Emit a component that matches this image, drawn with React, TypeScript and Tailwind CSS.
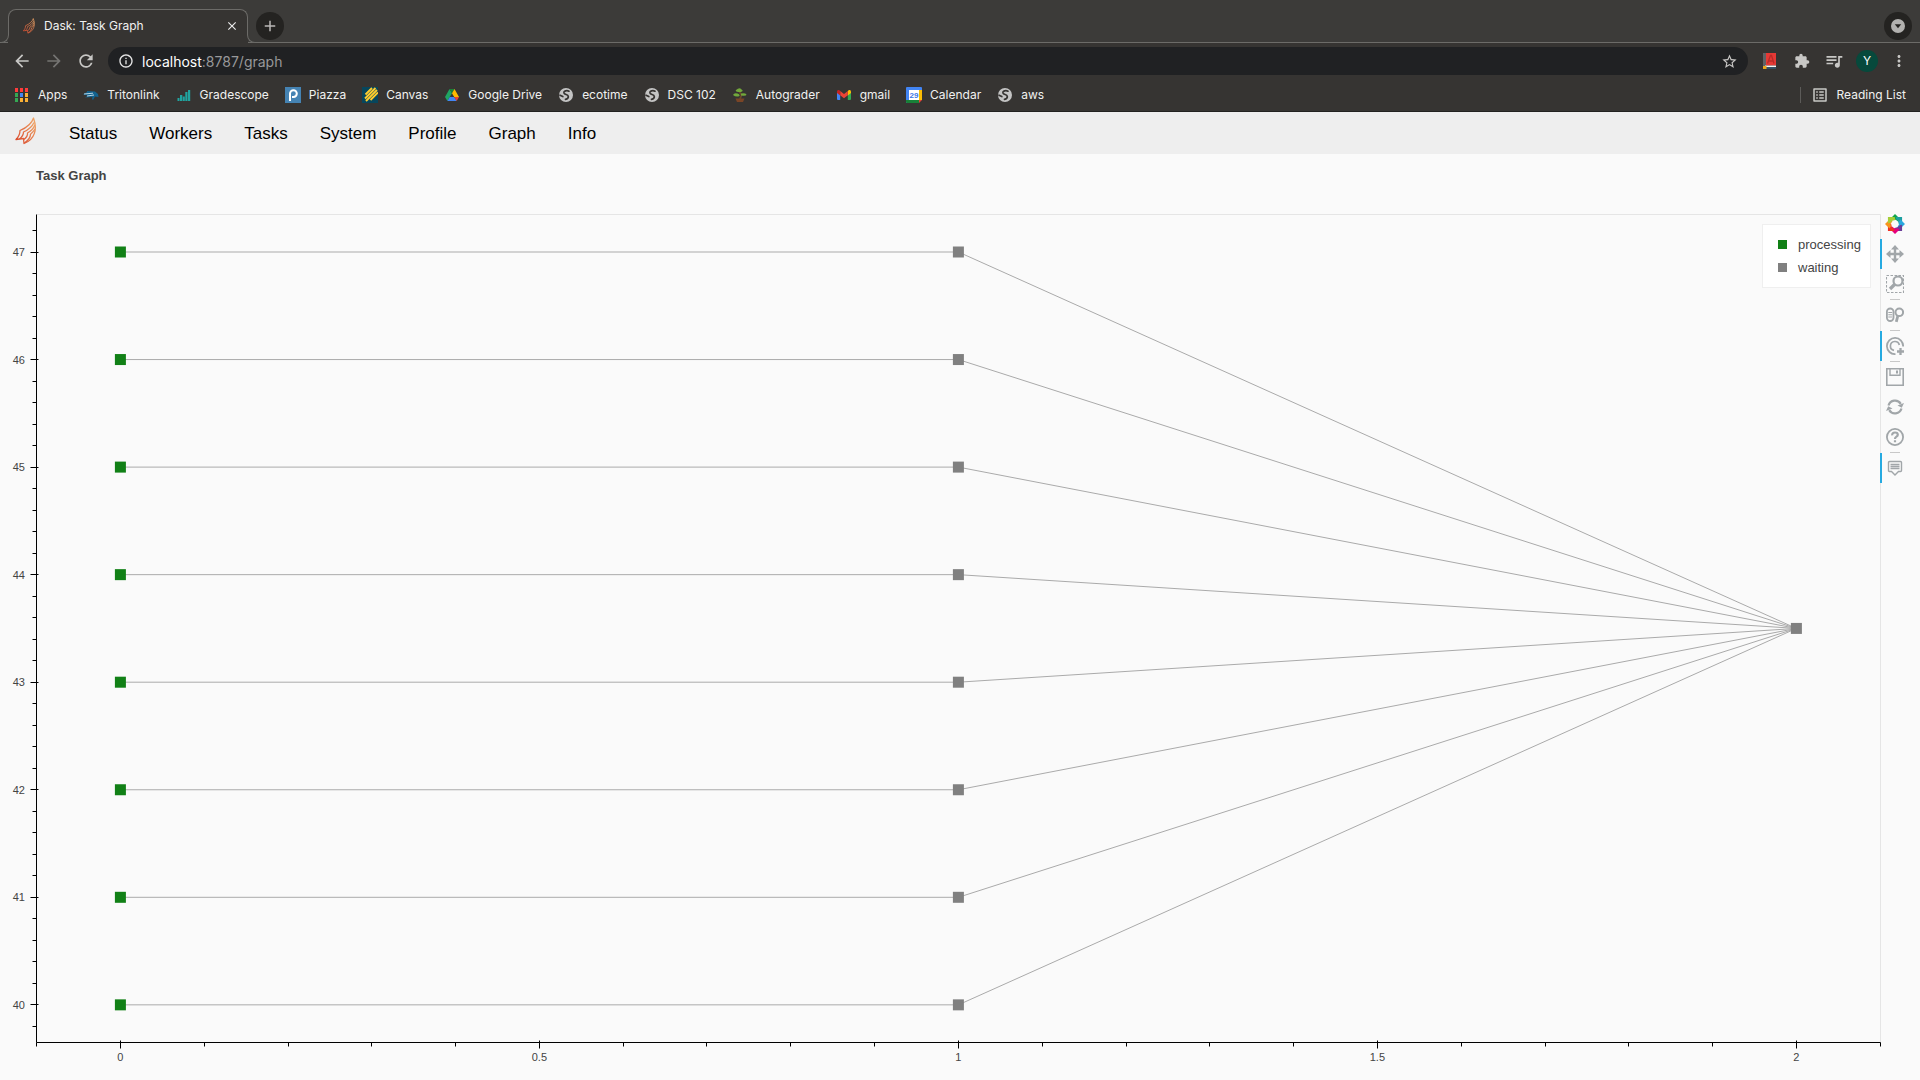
import type { ReactNode } from "react";
import {
  MdArrowBack,
  MdArrowForward,
  MdExtension,
  MdInfoOutline,
  MdMoreVert,
  MdOutlineListAlt,
  MdQueueMusic,
  MdRefresh,
  MdStarBorder,
  MdAdd,
  MdClose,
} from "react-icons/md";

function DaskLogo({ className }: { className: string }) {
  return (
    <svg viewBox="0 0 22 28" className={className} fill="none" strokeLinejoin="round" strokeWidth="1.3" aria-hidden="true">
      <defs>
        <linearGradient id="flame" x1="0" y1="1" x2="1" y2="0">
          <stop offset="0" stopColor="#d9472b" />
          <stop offset="1" stopColor="#f0a868" />
        </linearGradient>
      </defs>
      <g stroke="url(#flame)">
        <path d="M18.500 1 C17 6 12 10.500 5 13.500 C5 17 3.500 20 1 22.500 L8.500 21.500 L9 26.500 C20 22.500 22.500 12 18.500 1Z" />
        <path d="M19 5.500 C17 10 13 13 8.500 15 C8.500 17.500 7 20 4.500 22 M19.800 8 C18.500 12 16 14 12.500 16 C12.800 18 11.500 20.500 8.800 22.500 M20 12 C18.500 14.500 17 16 15.500 17.200 C15.500 20 13.500 23 9.500 26" />
      </g>
    </svg>
  );
}

function Globe() {
  return (
    <svg viewBox="0 0 16 16" className="size-4" aria-hidden="true">
      <circle cx="8" cy="8" r="7" fill="#c4c4c4" />
      <path
        d="M11 4.200 C9 3.200 5.500 3.800 6 6 C6.500 7.800 10 7.200 10.300 9.300 C10.500 11 9 12 7.500 12.300 M2 8.200 L4.800 9.600"
        fill="none"
        stroke="#363432"
        strokeWidth="1.700"
        strokeLinecap="round"
      />
    </svg>
  );
}

const appColours = ["#ff3b3b", "#ff3b3b", "#ff3b3b", "#34a853", "#4285f4", "#fbb034", "#34a853", "#fbb034", "#fbb034"];

const bookmarks: { name: string; icon: ReactNode }[] = [
  {
    name: "Apps",
    icon: (
      <svg viewBox="0 0 16 16" className="size-4" aria-hidden="true">
        {appColours.map((c, i) => (
          <rect key={i} x={1 + (i % 3) * 5} y={1 + Math.floor(i / 3) * 5} width="3" height="4" fill={c} />
        ))}
      </svg>
    ),
  },
  {
    name: "Tritonlink",
    icon: (
      <svg viewBox="0 0 16 16" className="size-4" aria-hidden="true">
        <path d="M0 7.500 L4 5 L4 4 L12 4.500 L15 7 L15.500 10 L12 9.500 L10 13 L9 12 L9.500 10 L2 10.500 L5 8.500Z" fill="#12628f" />
        <path d="M1 7 L10 6.200 M4 9 L11 8" stroke="#b7d3e2" strokeWidth="1" />
      </svg>
    ),
  },
  {
    name: "Gradescope",
    icon: (
      <svg viewBox="0 0 16 16" className="size-4" aria-hidden="true" fill="#20a5a0">
        <path d="M1.500 11h2v3h-2z M4 8h2.300v6h-2.300z M6.800 9.500h2v4.500h-2z M9.300 5h2.200v9h-2.200z M12 3h2.200v11h-2.200z" />
      </svg>
    ),
  },
  {
    name: "Piazza",
    icon: (
      <svg viewBox="0 0 16 16" className="size-4" aria-hidden="true">
        <rect width="16" height="16" fill="#4583b3" />
        <path d="M5 14 V6.500 A3.400 3.400 0 1 1 8.500 10 H7" fill="none" stroke="#fff" strokeWidth="2" />
      </svg>
    ),
  },
  {
    name: "Canvas",
    icon: (
      <svg viewBox="0 0 16 16" className="size-4" aria-hidden="true">
        <rect width="16" height="16" fill="#07465c" />
        <path d="M3.500 7.500 L10 1 M3 11.500 L13.500 1 M4 14 L15 3 M8.500 13 L16 5.500" stroke="#ffcd2e" strokeWidth="1.900" />
      </svg>
    ),
  },
  {
    name: "Google Drive",
    icon: (
      <svg viewBox="0 0 16 16" className="size-4" aria-hidden="true">
        <path d="M5.500 2 L8 6.300 L3.400 14 L1 10Z" fill="#1fa463" />
        <path d="M5.500 2 H10.500 L8 6.300Z" fill="#188038" />
        <path d="M10.500 2 L15 10 H10.200 L8 6.300Z" fill="#ffba00" />
        <path d="M5.800 10 H10.200 L12.700 14 H3.400Z" fill="#4285f4" />
        <path d="M10.200 10 H15 L12.700 14Z" fill="#ea4335" />
      </svg>
    ),
  },
  { name: "ecotime", icon: <Globe /> },
  { name: "DSC 102", icon: <Globe /> },
  {
    name: "Autograder",
    icon: (
      <svg viewBox="0 0 16 16" className="size-4" aria-hidden="true">
        <path d="M7 4 L9.500 8 L8 12" stroke="#6b4a2c" strokeWidth="1.800" fill="none" />
        <path d="M4 3 Q8 -0.500 10 3 Q12 4 9 5 L6 5 Q3 4.500 4 3Z M9 6.500 Q13 5.500 14.500 7.500 Q14.500 9 11 8.800 L9 8.500Z M1 8 Q2 5.500 5.500 6.500 Q8 7 7.500 9 Q4 10.500 1 8Z" fill="#72a83b" />
        <path d="M3.500 11.500 H12.500 L11 15 H5Z" fill="#7a4526" />
      </svg>
    ),
  },
  {
    name: "gmail",
    icon: (
      <svg viewBox="0 0 16 16" className="size-4" aria-hidden="true">
        <path d="M1 4.500 L4.200 7 V13 H2 Q1 13 1 12Z" fill="#4285f4" />
        <path d="M15 4.500 L11.800 7 V13 H14 Q15 13 15 12Z" fill="#34a853" />
        <path d="M11.800 4 L13 3 Q15 2.500 15 4.600 V6 L11.800 8.500Z" fill="#fbbc04" />
        <path d="M4.200 4 L8 7 L11.800 4 V8.300 L8 11.200 L4.200 8.300Z" fill="#ea4335" />
        <path d="M4.200 4 L3 3 Q1 2.500 1 4.600 V6 L4.200 8.500Z" fill="#c5221f" />
      </svg>
    ),
  },
  {
    name: "Calendar",
    icon: (
      <svg viewBox="0 0 16 16" className="size-4" aria-hidden="true">
        <path d="M1 0 H15 Q16 0 16 1 V12 L12 16 H1 Q0 16 0 15 V1 Q0 0 1 0Z" fill="#4285f4" />
        <path d="M13 3 H16 V13 H13Z" fill="#fbbc04" />
        <path d="M0 13 H13 V16 H1 Q0 16 0 15Z" fill="#188038" />
        <path d="M13 13 H16 L13 16Z" fill="#ea4335" />
        <rect x="3" y="3" width="10" height="10" fill="#fff" />
        <text x="8" y="11" textAnchor="middle" fontSize="8" fontWeight="700" fill="#3b78e7" fontFamily="Liberation Sans, sans-serif">
          29
        </text>
      </svg>
    ),
  },
  { name: "aws", icon: <Globe /> },
];

function TabStrip() {
  return (
    <div className="flex h-[43px] items-end border-b border-[#6c6b68] bg-[#3c3b39] pl-2">
      <div className="relative -mb-px flex h-[34px] w-[240px] items-center rounded-t-lg bg-[#363432] pr-2 pl-3.5">
        <span className="absolute inset-x-0 top-0 h-6 rounded-t-lg border-x border-t border-[#6c6b68]" />
        <span className="absolute bottom-0 -left-2 h-2.5 w-[9px] rounded-br-lg border-r border-b border-[#6c6b68] bg-[#3c3b39]" />
        <span className="absolute -right-2 bottom-0 h-2.5 w-[9px] rounded-bl-lg border-b border-l border-[#6c6b68] bg-[#3c3b39]" />
        <DaskLogo className="h-4 w-3.5" />
        <span className="ml-2 flex-1 text-[12px] text-[#f1f1f0]">Dask: Task Graph</span>
        <button aria-label="Close tab" className="flex size-4 items-center justify-center text-[#ececec]">
          <MdClose className="size-3.5" />
        </button>
      </div>
      <button aria-label="New tab" className="mb-[2px] ml-2 flex size-7 items-center justify-center rounded-full bg-[#242321] text-[#b9b8b6]">
        <MdAdd className="size-[18px]" />
      </button>
      <button aria-label="Search tabs" className="mr-2 mb-[2px] ml-auto flex size-7 items-center justify-center rounded-full bg-[#242321]">
        <svg viewBox="0 0 14 14" className="size-3.5" aria-hidden="true">
          <circle cx="7" cy="7" r="7" fill="#b2b1af" />
          <path d="M3.800 5.200 H10.200 L7 9.300Z" fill="#242321" />
        </svg>
      </button>
    </div>
  );
}

function AddressBar() {
  return (
    <div className="flex h-9 items-center bg-[#363432] pr-3 pl-3 text-[#c8c7c5]">
      <button aria-label="Back" className="mr-3 flex size-5 items-center justify-center">
        <MdArrowBack className="size-5" />
      </button>
      <button aria-label="Forward" className="mr-3 flex size-5 items-center justify-center text-[#757472]">
        <MdArrowForward className="size-5" />
      </button>
      <button aria-label="Reload" className="mr-3 flex size-5 items-center justify-center">
        <MdRefresh className="size-5" />
      </button>
      <div className="flex h-7 flex-1 items-center rounded-full bg-[#202123] px-2.5">
        <MdInfoOutline className="size-4 text-[#e6e6e6]" />
        <a href="#graph" className="ml-2 flex-1 text-[14px] text-[#98989a]">
          <span className="text-white">localhost</span>:8787/graph
        </a>
        <button aria-label="Bookmark this tab">
          <MdStarBorder className="size-[17px]" />
        </button>
      </div>
      <button aria-label="Dictionary" className="ml-3.5">
        <svg viewBox="0 0 16 16" className="size-4" aria-hidden="true">
          <rect x="1" y="0" width="3" height="13" fill="#5f6266" />
          <rect x="4" y="0" width="10" height="12.500" fill="#e53935" />
          <path d="M5.500 10.500 L8.500 2.500 H9.500 L12 10.500 M6.500 8 H11.500" fill="none" stroke="#b92b28" strokeWidth="1.300" />
          <path d="M3 13.300 H14" stroke="#f3f3f3" strokeWidth="1.500" />
          <path d="M3 15 H14" stroke="#2f6690" strokeWidth="1" />
          <path d="M1 13 H4.500 V16 H1Z" fill="#e7a51c" />
        </svg>
      </button>
      <button aria-label="Extensions" className="ml-4">
        <MdExtension className="size-4" />
      </button>
      <button aria-label="Media controls" className="ml-3.5">
        <MdQueueMusic className="size-5" />
      </button>
      <button aria-label="Profile" className="ml-3 size-[22px] rounded-full bg-[#07493c] text-center text-[12px] leading-[22px] text-white">
        Y
      </button>
      <button aria-label="Menu" className="ml-3">
        <MdMoreVert className="size-[18px]" />
      </button>
    </div>
  );
}

function BookmarksBar() {
  return (
    <div className="flex h-[33px] items-center border-b border-[#222120] bg-[#363432] pr-3.5 pl-3.5 text-[12px] text-[#f1f1f0]">
      <nav aria-label="Bookmarks" className="flex gap-4">
        {bookmarks.map((b) => (
          <a key={b.name} href="#bookmark" className="flex items-center gap-2 whitespace-nowrap">
            {b.icon}
            {b.name}
          </a>
        ))}
      </nav>
      <button className="ml-auto flex h-4 items-center border-l border-[#5c5b59] pl-2.5">
        <MdOutlineListAlt className="size-[18px] text-[#c8c7c5]" />
        <span className="ml-2">Reading List</span>
      </button>
    </div>
  );
}

const pages = ["Status", "Workers", "Tasks", "System", "Profile", "Graph", "Info"];

function SiteNav() {
  return (
    <nav className="flex h-[42px] items-center bg-[#eeeeee] pl-3.5 font-['Liberation_Sans',Arial,sans-serif] text-[17px] text-black">
      <a href="#home" aria-label="Dask" className="mr-4 -mt-1 pl-px">
        <DaskLogo className="h-7 w-[22px]" />
      </a>
      {pages.map((p) => (
        <a key={p} href={"#" + p.toLowerCase()} className="px-4 pt-0.5 first-of-type:px-0">
          {p}
        </a>
      ))}
    </nav>
  );
}

const LEFT = 36.5;
const RIGHT = 1880.5;
const TOP = 18.5;
const BOTTOM = 846.5;
const sx = (v: number) => 120.4 + v * 838;
const sy = (v: number) => 56 + (47 - v) * 107.55;

const rows = [47, 46, 45, 44, 43, 42, 41, 40];
const yTicks = Array.from({ length: 38 }, (_, i) => 398 + i * 2);
const xTicks = Array.from({ length: 23 }, (_, i) => i - 1);

function Marker({ x, y, color }: { x: number; y: number; color: string }) {
  return <rect x={x - 5.5} y={y - 5.5} width="11" height="11" fill={color} />;
}

function TaskGraph() {
  return (
    <svg
      viewBox="0 0 1880 882"
      role="img"
      aria-label="Task Graph"
      className="block min-w-0 flex-1 overflow-visible font-['Liberation_Sans',Arial,sans-serif]"
    >
      <path d={`M${LEFT} ${TOP} H${RIGHT} V${BOTTOM}`} fill="none" stroke="#e5e5e5" />
      <g stroke="#aaaaaa" strokeWidth="1">
        {rows.map((r) => (
          <polyline key={r} fill="none" points={`${sx(0)},${sy(r)} ${sx(1)},${sy(r)} ${sx(2)},${sy(43.5)}`} />
        ))}
      </g>
      {rows.map((r) => (
        <g key={r}>
          <Marker x={sx(0)} y={sy(r)} color="#118016" />
          <Marker x={sx(1)} y={sy(r)} color="#808080" />
        </g>
      ))}
      <Marker x={sx(2)} y={sy(43.5)} color="#808080" />

      <g stroke="#000000">
        <path d={`M${LEFT} ${TOP} V${BOTTOM} H${RIGHT}`} fill="none" />
        {yTicks.map((t) => {
          const y = Math.floor(sy(t / 10)) + 0.5;
          return t % 10 === 0 ? (
            <line key={t} x1="30.5" x2="38.5" y1={y} y2={y} />
          ) : (
            <line key={t} x1="32.5" x2="36.5" y1={y} y2={y} />
          );
        })}
        {xTicks.map((t) => {
          const x = Math.floor(sx(t / 10)) + 0.5;
          return t % 5 === 0 ? (
            <line key={t} x1={x} x2={x} y1="844.5" y2="852.5" />
          ) : (
            <line key={t} x1={x} x2={x} y1="846.5" y2="850.5" />
          );
        })}
      </g>
      <g fontSize="11" fill="#444444">
        {rows.map((r) => (
          <text key={r} x="25" y={sy(r) + 4} textAnchor="end">
            {r}
          </text>
        ))}
        {[0, 0.5, 1, 1.5, 2].map((v) => (
          <text key={v} x={sx(v)} y="865" textAnchor="middle">
            {v}
          </text>
        ))}
      </g>

      <rect x="1762.5" y="28.5" width="108" height="63" fill="#ffffff" stroke="#efefef" />
      <rect x="1778" y="44" width="9" height="9" fill="#118016" />
      <rect x="1778" y="67" width="9" height="9" fill="#808080" />
      <g fontSize="13" fill="#444444">
        <text x="1798" y="53">
          processing
        </text>
        <text x="1798" y="76">
          waiting
        </text>
      </g>
    </svg>
  );
}

const bokehColours = ["#10a54a", "#1b9fa0", "#29a8df", "#6a3d99", "#e6007e", "#ee3124", "#f7941d", "#a6ce39"];

function BokehLogo() {
  return (
    <svg viewBox="0 0 20 20" className="size-5" aria-hidden="true">
      {bokehColours.map((c, i) => (
        <g key={c} transform={`rotate(${i * 45} 10 10)`}>
          <path d="M5.500 4.500 L10 0 L14.800 4.800 L13 7.500 Q10.500 5 7.500 5.800Z" fill={c} />
        </g>
      ))}
    </svg>
  );
}

type Tool = { label: string; active?: boolean; separated?: boolean; icon: ReactNode };

const tools: Tool[] = [
  {
    label: "Pan",
    active: true,
    icon: (
      <>
        <path d="M9 2 V16 M2 9 H16" strokeWidth="2.400" />
        <path d="M9 0 L13 4.500 H5Z M9 18 L13 13.500 H5Z M0 9 L4.500 5 V13Z M18 9 L13.500 5 V13Z" fill="#a1a6a9" stroke="none" />
      </>
    ),
  },
  {
    label: "Box Zoom",
    icon: (
      <>
        <path d="M0.500 0.500 H17.500 V17.500 H0.500Z" strokeWidth="1.100" strokeDasharray="2.500 1.500" />
        <circle cx="12" cy="6" r="4.500" strokeWidth="2.200" fill="#fafafa" />
        <path d="M9 9 L4 14" strokeWidth="3.400" />
      </>
    ),
  },
  {
    label: "Wheel Zoom",
    separated: true,
    icon: (
      <>
        <rect x="0.900" y="2.500" width="6.600" height="12.500" rx="3.300" strokeWidth="1.800" />
        <path d="M2.300 6.500 H6.200 M2.300 8.700 H6.200 M2.300 11 H6.200" strokeWidth="1.100" />
        <circle cx="13.300" cy="6.300" r="3.800" strokeWidth="2" />
        <path d="M11.800 10 L10.300 15.800" strokeWidth="2.800" />
      </>
    ),
  },
  {
    label: "Tap",
    active: true,
    separated: true,
    icon: (
      <>
        <path d="M17.100 9.500 A8.100 8.100 0 1 0 9.500 17.100" strokeWidth="1.800" />
        <path d="M13.300 8 A4.500 4.500 0 1 0 8 13.400" strokeWidth="1.700" />
        <path d="M14.500 11 V18 M11 14.500 H18" strokeWidth="2.300" />
      </>
    ),
  },
  {
    label: "Save",
    separated: true,
    icon: (
      <>
        <path d="M0.800 0.800 H17.200 V17.200 H0.800Z" strokeWidth="1.600" />
        <path d="M4 0.800 V7.300 H14 V0.800" strokeWidth="1.400" />
        <path d="M11 2.500 V5.500" strokeWidth="2" />
      </>
    ),
  },
  {
    label: "Reset",
    icon: (
      <>
        <path d="M2.500 7.500 A6.800 6.800 0 0 1 14.800 5.800 M15.500 10.500 A6.800 6.800 0 0 1 3.200 12.200" strokeWidth="2.200" />
        <path d="M18 5 L15.800 9.800 L11.500 7.500Z M0 13 L2.200 8.200 L6.500 10.500Z" fill="#a1a6a9" stroke="none" />
      </>
    ),
  },
  {
    label: "Help",
    icon: (
      <>
        <circle cx="9" cy="9" r="8.100" strokeWidth="1.800" />
        <path d="M6.200 7.300 Q6 4.500 9 4.500 Q11.800 4.500 11.800 6.800 Q11.800 8 10.200 8.900 Q9 9.600 9 11 M9 12.300 V14.300" strokeWidth="2.200" />
      </>
    ),
  },
  {
    label: "Hover",
    active: true,
    separated: true,
    icon: (
      <>
        <path d="M3.500 2.500 H14.500 Q15.500 2.500 15.500 3.500 V11.500 Q15.500 12.500 14.500 12.500 H12.500 L9 16 L5.500 12.500 H3.500 Q2.500 12.500 2.500 11.500 V3.500 Q2.500 2.500 3.500 2.500Z" strokeWidth="1.400" />
        <path d="M4.500 5.500 H13.500 M4.500 7.500 H13.500 M4.500 9.500 H13.500" strokeWidth="1.300" />
      </>
    ),
  },
];

function PlotToolbar() {
  return (
    <div className="relative w-10 shrink-0 pt-[13px]">
      <a href="#bokeh" aria-label="Bokeh" className="flex size-[30px] items-center justify-center">
        <BokehLogo />
      </a>
      {tools.map((t) => (
        <div key={t.label}>
          {t.separated && <div className="ml-2.5 h-px w-2.5 bg-[#c8c8c8]" />}
          <button
            aria-label={t.label}
            className={
              "flex size-[30px] items-center justify-center border-x-2 border-r-transparent " +
              (t.active ? "border-l-[#26aae1]" : "border-l-transparent")
            }
          >
            <svg viewBox="0 0 18 18" className="size-[18px] shrink-0" fill="none" stroke="#a1a6a9" aria-hidden="true">
              {t.icon}
            </svg>
          </button>
        </div>
      ))}
    </div>
  );
}

export default function App() {
  return (
    <div className="min-h-screen bg-[#fafafa] font-['Inter',sans-serif]">
      <header>
        <TabStrip />
        <AddressBar />
        <BookmarksBar />
      </header>
      <SiteNav />
      <main>
        <h1 className="h-[42px] pt-3 pl-9 font-['Liberation_Sans',Arial,sans-serif] text-[13px] leading-5 font-bold text-[#444444]">
          Task Graph
        </h1>
        <div className="flex items-start">
          <TaskGraph />
          <PlotToolbar />
        </div>
      </main>
    </div>
  );
}
